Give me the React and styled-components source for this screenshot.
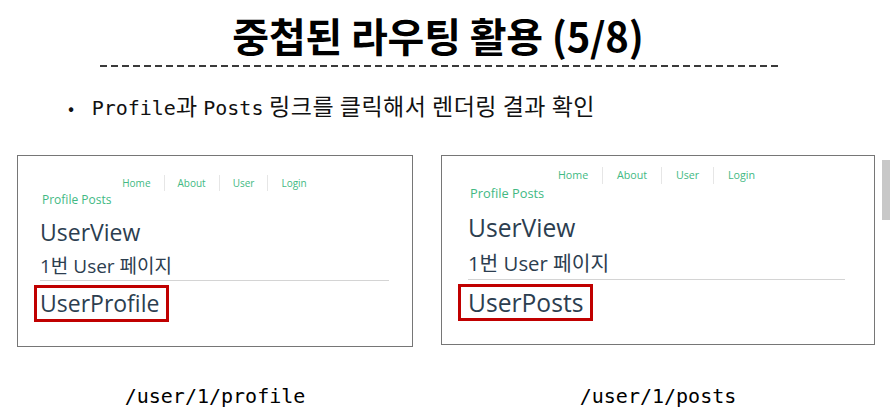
import React from "react";
import styled, { createGlobalStyle } from "styled-components";

const GlobalStyle = createGlobalStyle`
  body {
    margin: 0;
    background: #fff;
  }
`;

const Slide = styled.div`
  width: 890px;
  height: 411px;
  overflow: hidden;
  display: flex;
  flex-direction: column;
  font-family: "Noto Sans CJK KR", sans-serif;
  color: #000;
`;

const Title = styled.h1`
  margin: 12px 0 0;
  padding-right: 14px;
  font-size: 40px;
  line-height: 46px;
  font-weight: 700;
  text-align: center;
  letter-spacing: -0.2px;
`;

const Divider = styled.div`
  margin: 7px 0 0 100px;
  width: 678px;
  height: 2px;
  background: repeating-linear-gradient(
    to right,
    #3a3a3a 0 7px,
    transparent 7px 11px
  );
`;

const BulletRow = styled.div`
  display: flex;
  align-items: center;
  gap: 17px;
  margin: 24px 0 0 68px;
  font-size: 23px;
  line-height: 28px;
  letter-spacing: 0.5px;
  color: #111;
`;

const Dot = styled.span`
  font-size: 18px;
`;

const Code = styled.span`
  font-family: "DejaVu Sans Mono", monospace;
  font-size: 20px;
  letter-spacing: 0;
`;

const PanelRow = styled.div`
  display: flex;
  align-items: flex-start;
  margin-top: 33px;
  padding-left: 17px;
`;

const Column = styled.div`
  display: flex;
  flex-direction: column;
  align-items: center;
  margin-left: ${(p) => p.$ml || 0}px;
`;

const Panel = styled.div`
  --s: ${(p) => p.$s};
  box-sizing: border-box;
  width: ${(p) => p.$w}px;
  height: ${(p) => p.$h}px;
  border: 1px solid #767676;
  padding: ${(p) => p.$top}px ${(p) => p.$right}px 0 ${(p) => p.$left}px;
  font-family: "Open Sans", "Noto Sans CJK KR", sans-serif;
  color: #2c3e50;
`;

const Nav = styled.nav`
  display: flex;
  justify-content: center;
`;

const NavLink = styled.a`
  padding: 0 calc(13px * var(--s));
  font-size: calc(10px * var(--s));
  line-height: calc(16px * var(--s));
  color: #42b983;
  & + & {
    border-left: 1px solid #e6e6e6;
  }
`;

const SubNav = styled.div`
  font-size: calc(12px * var(--s));
  line-height: calc(18px * var(--s));
  color: #42b983;
  padding-left: 2px;
`;

const ViewTitle = styled.div`
  margin-top: calc(7px * var(--s));
  font-size: calc(23px * var(--s));
  line-height: calc(32px * var(--s));
`;

const SubTitle = styled.div`
  margin-top: calc(5px * var(--s));
  font-size: calc(19px * var(--s));
  line-height: calc(26px * var(--s));
`;

const Rule = styled.hr`
  margin: 1px 0 0;
  border: 0;
  border-top: 1px solid #d4d4d4;
`;

const Marked = styled.div`
  display: inline-block;
  margin: 4px 0 0 ${(p) => -p.$pad - 3}px;
  padding: 0 7px 0 ${(p) => p.$pad}px;
  border: 3px solid #c00000;
  font-size: calc(23px * var(--s));
  line-height: 31px;
`;

const Caption = styled.div`
  margin-top: ${(p) => p.$mt}px;
  font-family: "DejaVu Sans Mono", monospace;
  font-size: 20px;
  line-height: 24px;
  color: #000;
`;

const ScrollTab = styled.div`
  margin: 5px 0 0 auto;
  width: 8px;
  height: 60px;
  background: #c8c8c8;
`;

const UserPanel = ({ s, w, h, top, left, right, pad, child }) => (
  <Panel $s={s} $w={w} $h={h} $top={top} $left={left} $right={right}>
    <Nav>
      <NavLink>Home</NavLink>
      <NavLink>About</NavLink>
      <NavLink>User</NavLink>
      <NavLink>Login</NavLink>
    </Nav>
    <SubNav>Profile Posts</SubNav>
    <ViewTitle>UserView</ViewTitle>
    <SubTitle>1번 User 페이지</SubTitle>
    <Rule />
    <Marked $pad={pad}>{child}</Marked>
  </Panel>
);

export default function App() {
  return (
    <>
      <GlobalStyle />
      <Slide>
        <Title>중첩된 라우팅 활용 (5/8)</Title>
        <Divider />
        <BulletRow>
          <Dot>•</Dot>
          <span>
            <Code>Profile</Code>과 <Code>Posts</Code> 링크를 클릭해서 렌더링 결과 확인
          </span>
        </BulletRow>
        <PanelRow>
          <Column>
            <UserPanel s={1} w={396} h={192} top={19} left={22} right={23} pad={3} child="UserProfile" />
            <Caption $mt={37}>/user/1/profile</Caption>
          </Column>
          <Column $ml={28}>
            <UserPanel s={1.07} w={434} h={190} top={11} left={26} right={29} pad={7} child="UserPosts" />
            <Caption $mt={39}>/user/1/posts</Caption>
          </Column>
          <ScrollTab />
        </PanelRow>
      </Slide>
    </>
  );
}
